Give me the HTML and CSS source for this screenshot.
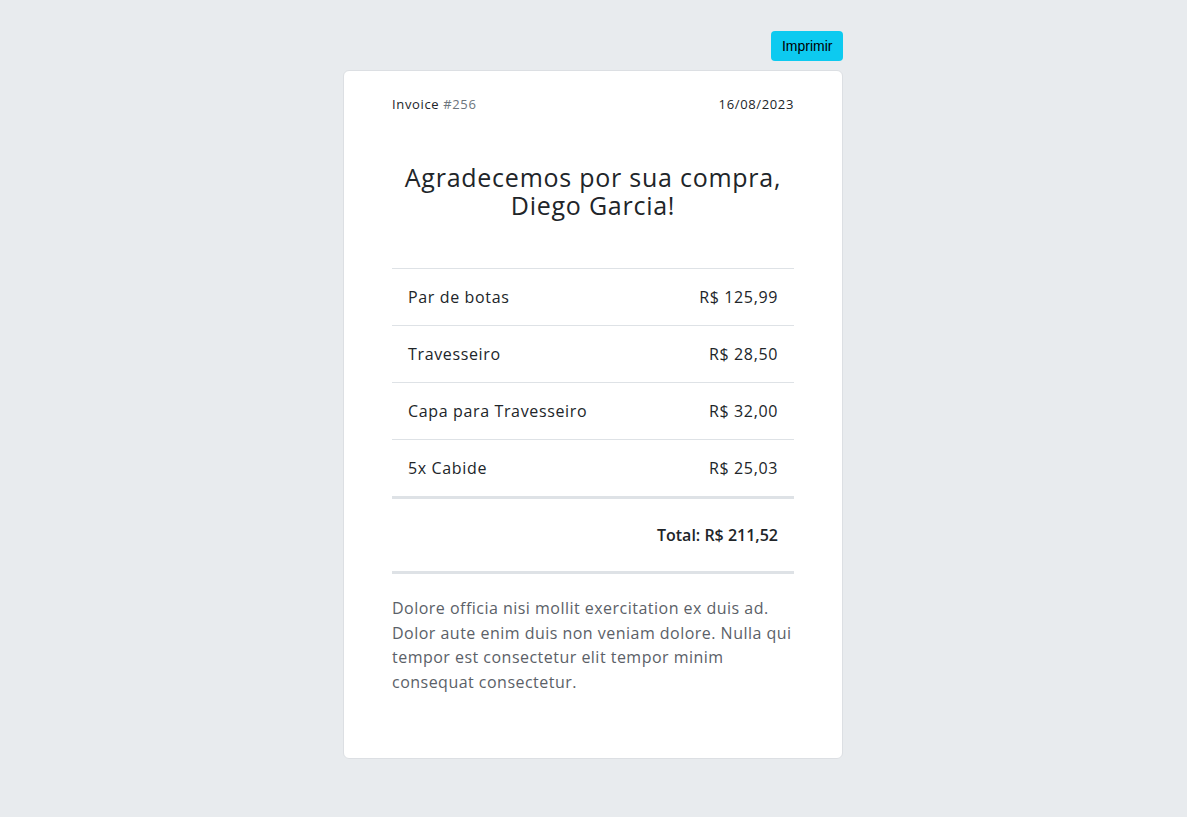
FILE: index.html
```html
<!DOCTYPE html>
<html lang="pt-BR">
<head>
<meta charset="utf-8">
<title>Invoice #256</title>
<link rel="stylesheet" href="styles.css">
</head>
<body>
<main class="page">
  <div class="toolbar">
    <button class="print-btn" type="button">Imprimir</button>
  </div>
  <section class="card">
    <header class="card-header">
      <span class="invoice-id">Invoice <span class="muted">#256</span></span>
      <span class="invoice-date">16/08/2023</span>
    </header>
    <h1 class="title">Agradecemos por sua compra,<br>Diego Garcia!</h1>
    <table class="items">
      <tbody>
        <tr><td>Par de botas</td><td class="price">R$ 125,99</td></tr>
        <tr><td>Travesseiro</td><td class="price">R$ 28,50</td></tr>
        <tr><td>Capa para Travesseiro</td><td class="price">R$ 32,00</td></tr>
        <tr><td>5x Cabide</td><td class="price">R$ 25,03</td></tr>
      </tbody>
      <tfoot>
        <tr><td></td><td class="total">Total: R$ 211,52</td></tr>
      </tfoot>
    </table>
    <p class="note">Dolore officia nisi mollit exercitation ex duis ad. Dolor aute enim duis non veniam dolore. Nulla qui tempor est consectetur elit tempor minim consequat consectetur.</p>
  </section>
</main>
</body>
</html>
```
FILE: styles.css
```css
html, body {
  margin: 0;
  padding: 0;
}
body {
  background: #e8ebee;
  font-family: "Open Sans", "Noto Sans", sans-serif;
  color: #212529;
  letter-spacing: 0.04em;
  padding-right: 1px;
}
.page {
  width: 500px;
  margin: 0 auto;
  padding-top: 31px;
}
.toolbar {
  display: flex;
  justify-content: flex-end;
  margin-bottom: 9px;
}
.print-btn {
  font-family: "Liberation Sans", Arial, sans-serif;
  font-size: 14px;
  letter-spacing: 0;
  color: #000;
  background: #0dcaf0;
  border: none;
  border-radius: 4px;
  height: 30px;
  padding: 0 10.5px;
  cursor: pointer;
}
.card {
  background: #fff;
  border: 1px solid #dcdfe3;
  border-radius: 6px;
  padding: 24px 48px 48px;
}
.card-header {
  display: flex;
  justify-content: space-between;
  font-size: 13px;
  line-height: 19px;
}
.muted {
  color: #6c757d;
}
.title {
  font-size: 25px;
  font-weight: 500;
  line-height: 28px;
  letter-spacing: 0.03em;
  text-align: center;
  margin: 49px 0 49px;
}
.items {
  width: 100%;
  border-collapse: collapse;
  font-size: 16px;
  line-height: 24px;
}
.items td {
  padding: 16px;
  border-top: 1px solid #dee2e6;
}
.items .price {
  text-align: right;
}
.items tfoot td {
  border-top: 3px solid #dee2e6;
  border-bottom: 3px solid #dee2e6;
  padding: 24px 16px 24px;
}
.items .total {
  text-align: right;
  font-weight: 600;
  letter-spacing: 0;
}
.note {
  margin: 22px 0 16px;
  font-size: 16px;
  line-height: 24.5px;
  letter-spacing: 0.03em;
  color: #5b6168;
}
```
